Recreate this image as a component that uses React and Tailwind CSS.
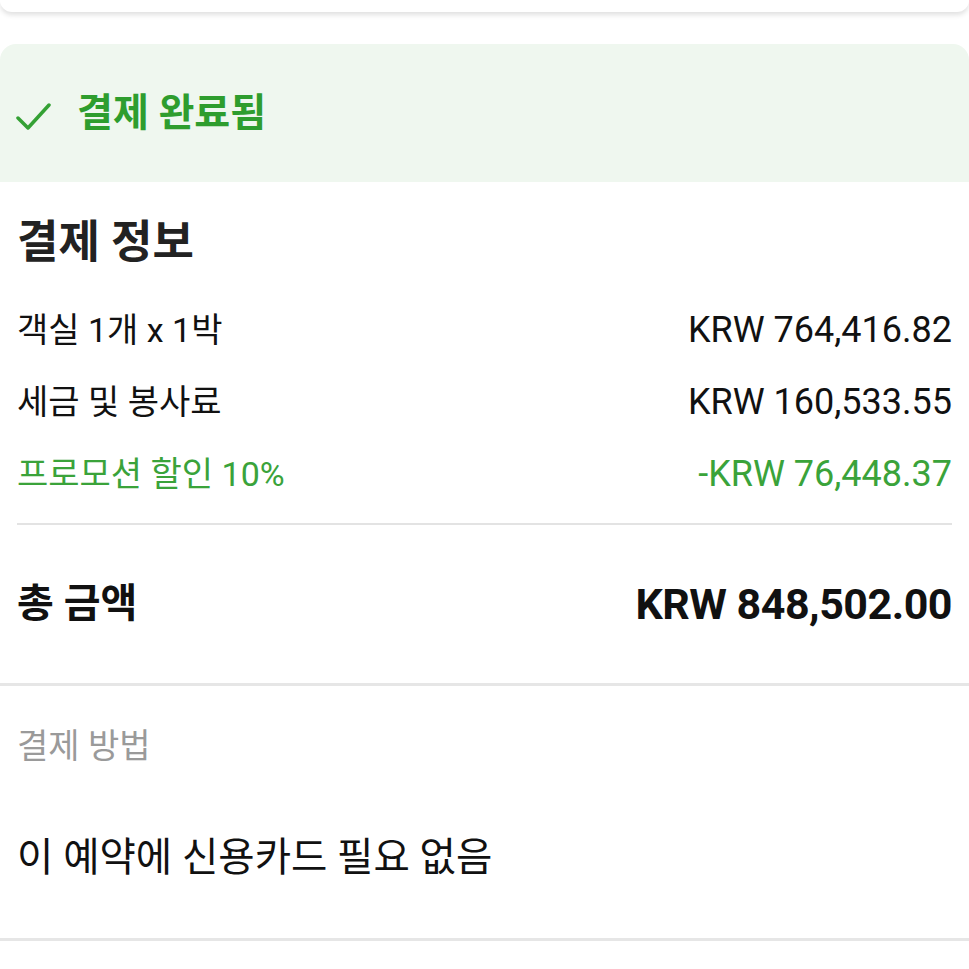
import React from 'react';

const font = { fontFamily: 'Roboto, "Noto Sans CJK KR", sans-serif' };

const Row = ({ label, value, green }) => (
  <div
    className={`flex h-[72px] items-center justify-between ${
      green ? 'text-[#3aa33a]' : 'text-[#111]'
    }`}
  >
    <span className="text-[34px]">{label}</span>
    <span className="text-[36px]">{value}</span>
  </div>
);

export default function App() {
  return (
    <div className="min-h-screen w-[969px] overflow-hidden bg-white" style={font}>
      {/* previous card edge */}
      <div className="h-[12px] rounded-b-[22px] bg-white shadow-[0_3px_5px_rgba(0,0,0,0.12)]" />

      {/* Status banner */}
      <div className="mt-[32px] flex h-[138px] items-center rounded-t-[16px] bg-[#eff7ef] px-[15px]">
        <svg width="36" height="30" viewBox="0 0 36 30" fill="none" className="mt-[6px]">
          <path d="M3 17 L13 27 L34 4" stroke="#34a134" strokeWidth="3.5" strokeLinecap="round" strokeLinejoin="round" />
        </svg>
        <span className="ml-[26px] text-[39px] font-bold text-[#2e9d2e]">결제 완료됨</span>
      </div>

      {/* Payment info */}
      <div className="px-[17px]">
        <h2 className="mt-[37px] text-[45px] font-bold leading-[48px] text-[#222]">결제 정보</h2>
        <div className="mt-[27px]">
          <Row label="객실 1개 x 1박" value="KRW 764,416.82" />
          <Row label="세금 및 봉사료" value="KRW 160,533.55" />
          <Row label="프로모션 할인 10%" value="-KRW 76,448.37" green />
        </div>
        <div className="mt-[13px] h-[2px] bg-[#e3e3e3]" />
        <div className="flex h-[158px] items-center justify-between font-bold text-[#111]">
          <span className="text-[40px]">총 금액</span>
          <span className="text-[43px] tracking-[-0.5px]">KRW 848,502.00</span>
        </div>
      </div>
      <div className="h-[3px] bg-[#e6e6e6]" />

      {/* Payment method */}
      <div className="px-[17px]">
        <div className="flex h-[120px] items-center text-[34px] text-[#9a9a9a]">결제 방법</div>
        <div className="h-[132px] pt-[28px] text-[39.5px] leading-[48px] text-[#111]">
          이 예약에 신용카드 필요 없음
        </div>
      </div>
      <div className="h-[3px] bg-[#e6e6e6]" />
    </div>
  );
}
